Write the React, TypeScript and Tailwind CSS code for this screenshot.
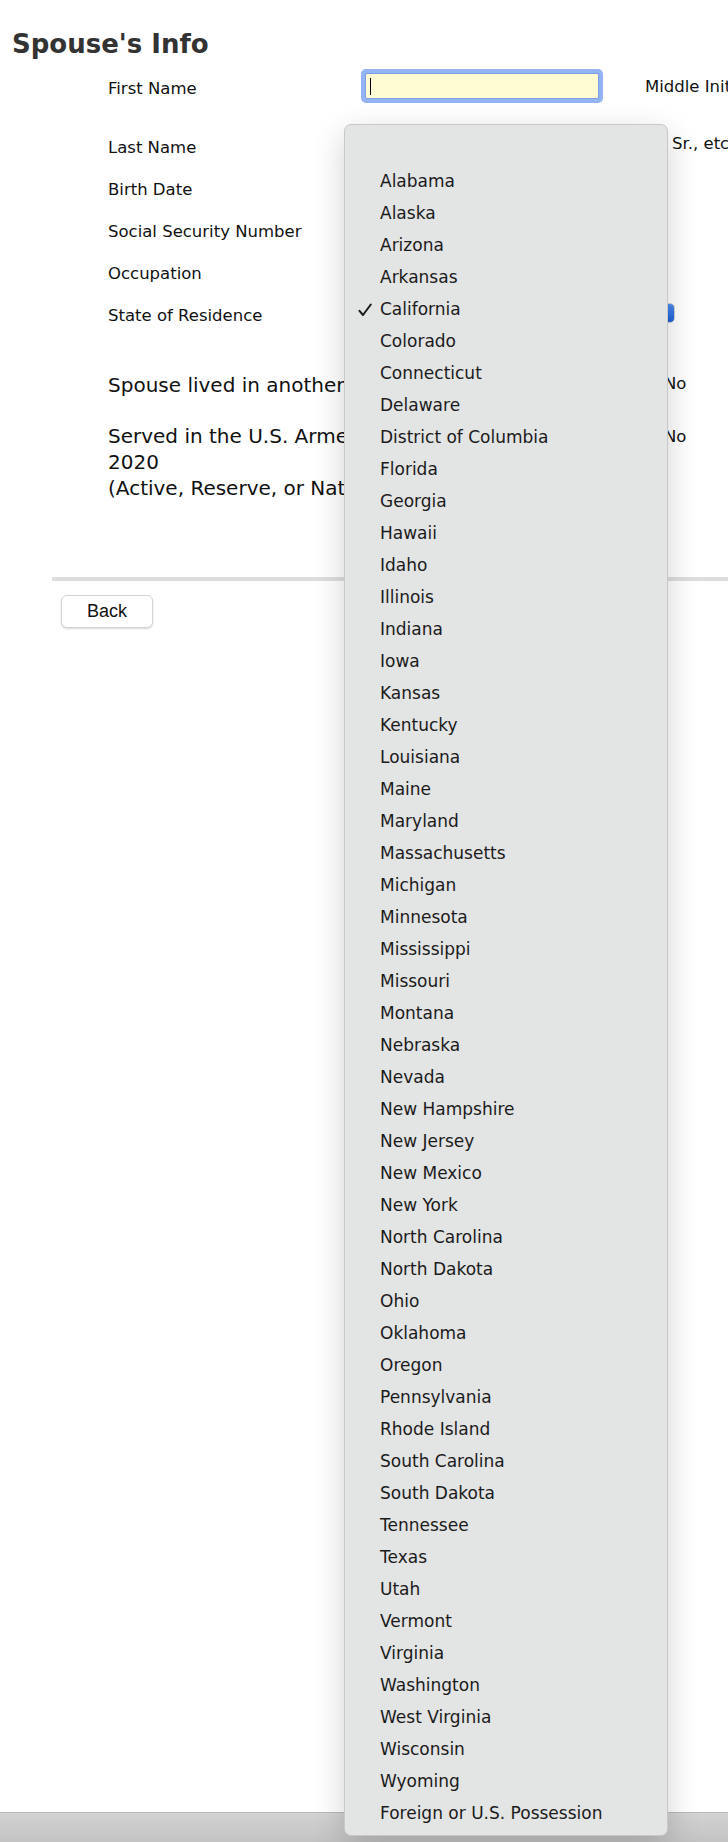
const STATES = [
  "",
  "Alabama",
  "Alaska",
  "Arizona",
  "Arkansas",
  "California",
  "Colorado",
  "Connecticut",
  "Delaware",
  "District of Columbia",
  "Florida",
  "Georgia",
  "Hawaii",
  "Idaho",
  "Illinois",
  "Indiana",
  "Iowa",
  "Kansas",
  "Kentucky",
  "Louisiana",
  "Maine",
  "Maryland",
  "Massachusetts",
  "Michigan",
  "Minnesota",
  "Mississippi",
  "Missouri",
  "Montana",
  "Nebraska",
  "Nevada",
  "New Hampshire",
  "New Jersey",
  "New Mexico",
  "New York",
  "North Carolina",
  "North Dakota",
  "Ohio",
  "Oklahoma",
  "Oregon",
  "Pennsylvania",
  "Rhode Island",
  "South Carolina",
  "South Dakota",
  "Tennessee",
  "Texas",
  "Utah",
  "Vermont",
  "Virginia",
  "Washington",
  "West Virginia",
  "Wisconsin",
  "Wyoming",
  "Foreign or U.S. Possession",
];

const SELECTED = "California";

function Check() {
  return (
    <svg width="14" height="14" viewBox="0 0 14 14" fill="none">
      <path d="M1.5 7.8 L5 12 L12.8 1.5" stroke="#1b1b1b" strokeWidth="2" strokeLinecap="round" strokeLinejoin="round" />
    </svg>
  );
}

function StateMenu() {
  return (
    <div className="absolute left-[344px] top-[124px] w-[324px] rounded-[7px] border border-[#c8c8c8] bg-[#e3e4e4] py-[7px] shadow-[0_10px_32px_rgba(0,0,0,0.18)]">
      {STATES.map((state, i) => (
        <div key={i} className="flex h-[32px] items-center pl-[13px] pt-[4px] text-[17px] text-[#1b1b1b]">
          <span className="flex w-[22px] shrink-0">{state === SELECTED ? <Check /> : null}</span>
          <span className="whitespace-nowrap">{state}</span>
        </div>
      ))}
    </div>
  );
}

function Field() {
  return <div className="-mt-[2px] h-[24px] w-[242px] shrink-0 rounded-[3px] border border-[#c9c9c9] bg-white" />;
}

function Row({ label, children }: { label: string; children?: React.ReactNode }) {
  return (
    <div className="mt-[22px] flex h-[20px]">
      <div className="w-[253px] shrink-0 whitespace-nowrap">{label}</div>
      {children}
    </div>
  );
}

export default function App() {
  return (
    <div className="relative flex h-[1842px] w-[728px] flex-col overflow-hidden bg-white font-['DejaVu_Sans',sans-serif] text-[#111]">
      <h1 className="pl-[12px] pt-[29px] text-[26px] font-bold leading-[30px] text-[#333]">Spouse's Info</h1>

      <div className="pl-[108px] text-[16.5px] leading-[20px]">
        <div className="mt-[10px] flex h-[34px]">
          <div className="w-[253px] shrink-0 pt-[10px]">First Name</div>
          <div className="w-[242px] shrink-0 rounded-[5px] bg-[#93b3f5] p-[4px]">
            <div className="h-[26px] rounded-[2px] border border-[#7d9fe6] bg-[#fffbd3] pl-[4px] pt-[4px]">
              <div className="h-[17px] w-px bg-black" />
            </div>
          </div>
          <div className="ml-[42px] shrink-0 whitespace-nowrap pt-[8px]">Middle Initial</div>
        </div>

        <div className="mt-[35px] flex h-[20px]">
          <div className="w-[253px] shrink-0">Last Name</div>
          <Field />
          <div className="-mt-[4px] ml-[69px] shrink-0 whitespace-nowrap">Sr., etc.</div>
        </div>
        <Row label="Birth Date">
          <Field />
        </Row>
        <Row label="Social Security Number">
          <Field />
        </Row>
        <Row label="Occupation">
          <Field />
        </Row>
        <Row label="State of Residence">
          <div className="-mt-[3px] flex h-[20px] w-[314px] shrink-0 justify-end rounded-[5px] border border-[#d2d2d2] bg-white">
            <div className="h-full w-[18px] rounded-r-[4px] bg-gradient-to-b from-[#4a8cf2] to-[#1f5fd8]" />
          </div>
        </Row>

        <div className="mt-[46px] flex">
          <div className="w-[236px] shrink-0 overflow-hidden whitespace-nowrap text-[20px] leading-[26px]">
            Spouse lived in another
          </div>
          <div className="ml-[320px] mt-[2px] shrink-0">No</div>
        </div>

        <div className="mt-[25px] flex">
          <div className="w-[236px] shrink-0 overflow-hidden whitespace-nowrap text-[20px] leading-[26px]">
            Served in the U.S. Armed
            <br />
            2020
            <br />
            (Active, Reserve, or National
          </div>
          <div className="ml-[320px] mt-[4px] shrink-0">No</div>
        </div>
      </div>

      <div className="ml-[52px] mt-[76px] h-[4px] bg-[#dedede]" />

      <button className="ml-[61px] mt-[14px] h-[33px] w-[92px] rounded-[6px] border border-[#d3d3d3] bg-white font-['Liberation_Sans',sans-serif] text-[18px] text-[#111] shadow-[0_1px_2px_rgba(0,0,0,0.15)]">
        Back
      </button>

      <div className="mt-auto h-[30px] border-t border-[#b9b9b9] bg-gradient-to-b from-[#d3d3d3] to-[#c3c3c3]" />

      <StateMenu />
    </div>
  );
}
